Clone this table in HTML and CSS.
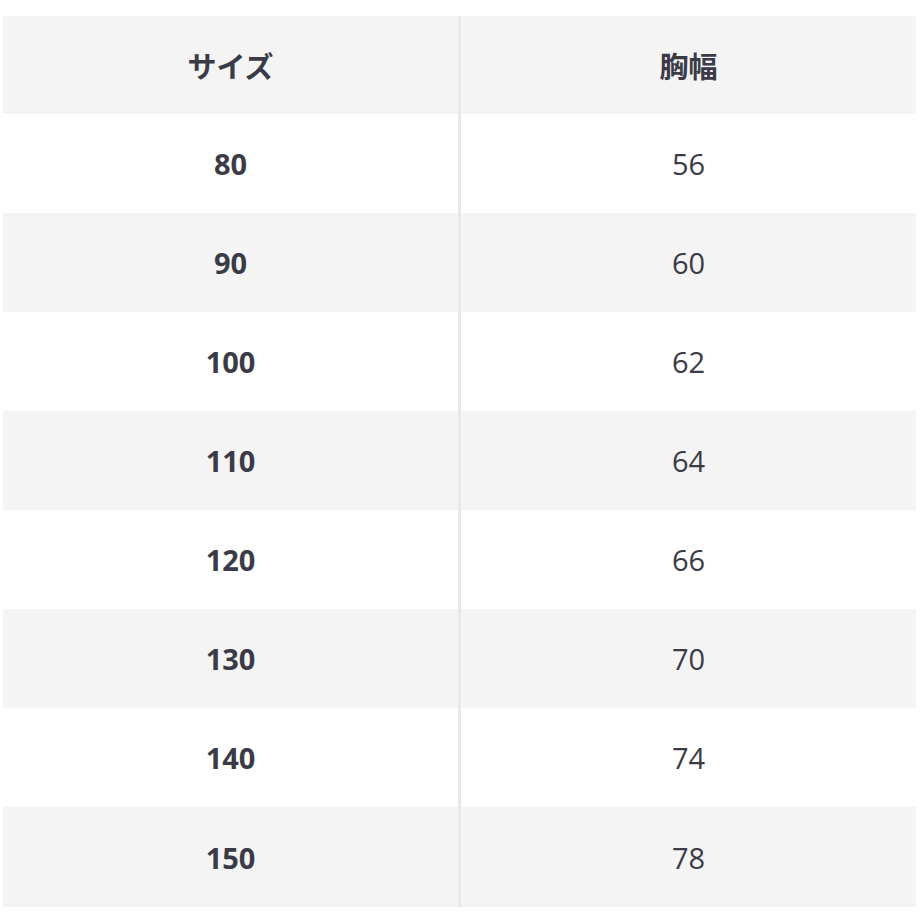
FILE: index.html
```html
<!DOCTYPE html>
<html lang="ja">
<head>
<meta charset="utf-8">
<link rel="stylesheet" href="styles.css">
</head>
<body>
<table class="size-table">
  <thead>
    <tr><th>サイズ</th><th>胸幅</th></tr>
  </thead>
  <tbody>
    <tr><th>80</th><td>56</td></tr>
    <tr><th>90</th><td>60</td></tr>
    <tr><th>100</th><td>62</td></tr>
    <tr><th>110</th><td>64</td></tr>
    <tr><th>120</th><td>66</td></tr>
    <tr><th>130</th><td>70</td></tr>
    <tr><th>140</th><td>74</td></tr>
    <tr><th>150</th><td>78</td></tr>
  </tbody>
</table>
</body>
</html>
```
FILE: styles.css
```css
html, body {
  margin: 0;
  padding: 0;
  background: #ffffff;
}
body {
  padding: 16px 4px 0 3px;
  font-family: "Open Sans", "Noto Sans CJK JP", sans-serif;
  color: #3a3b46;
}
.size-table {
  width: 913px;
  border-collapse: collapse;
  table-layout: fixed;
}
.size-table th,
.size-table td {
  height: 99px;
  padding: 0;
  text-align: center;
  vertical-align: middle;
  font-size: 29px;
  line-height: 1;
}
.size-table th {
  font-weight: 700;
}
.size-table td {
  font-weight: 400;
}
.size-table thead th {
  height: 98px;
  font-family: "Noto Sans CJK JP", sans-serif;
  font-weight: 700;
  font-size: 29px;
}
.size-table tbody tr:last-child > * {
  height: 100px;
}
.size-table tr > :first-child {
  width: 455px;
  border-right: 3px solid #e8e8ea;
}
.size-table thead tr,
.size-table tbody tr:nth-child(even) {
  background: #f4f4f5;
}
```
